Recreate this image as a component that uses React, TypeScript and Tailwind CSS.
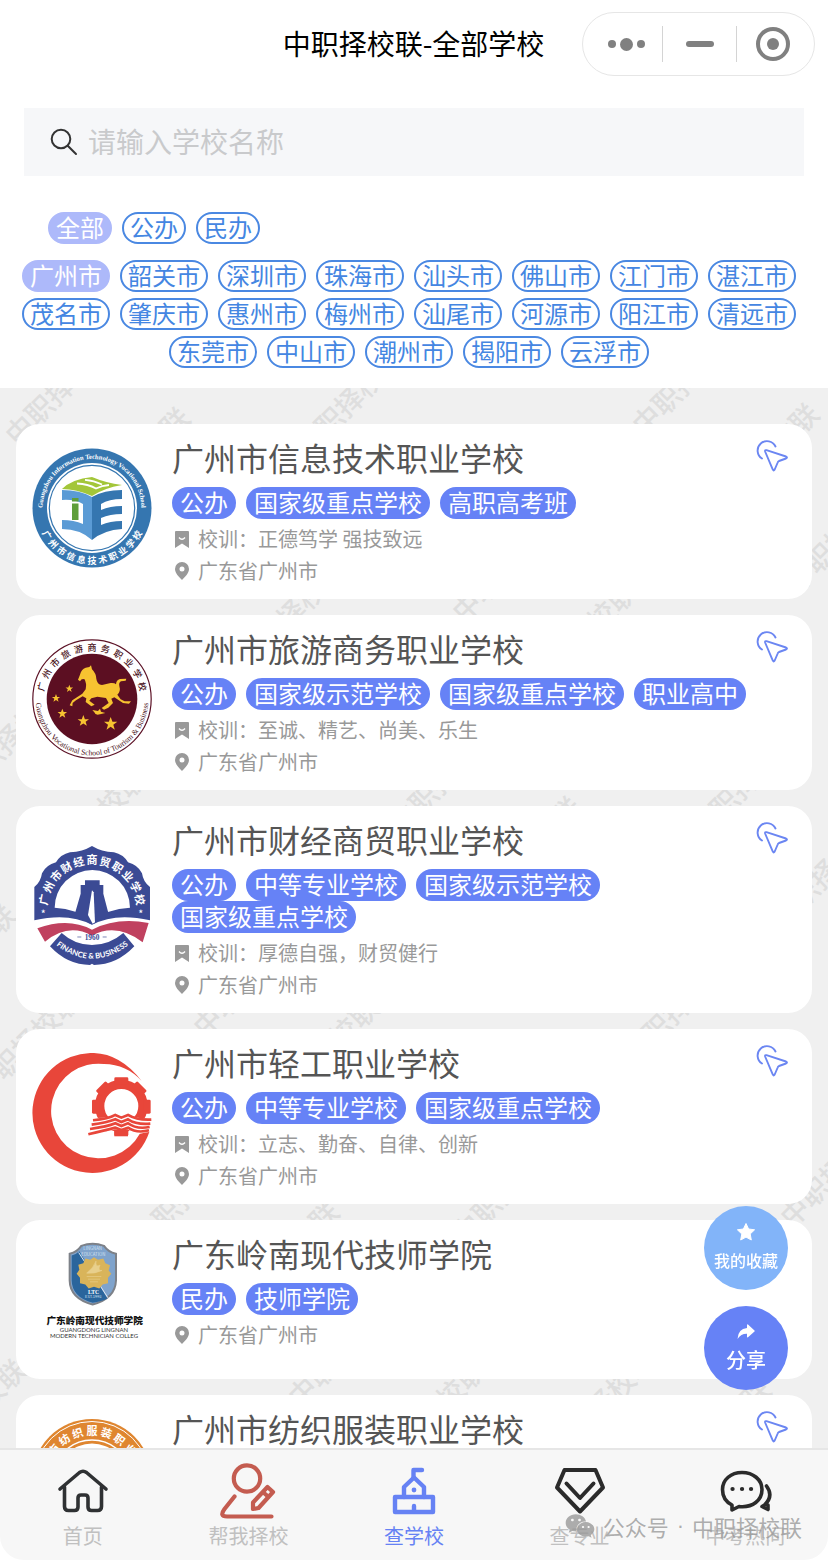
import React, { useState } from "react";
import { FaWeixin } from "react-icons/fa";

interface School {
  name: string;
  tags: string[];
  motto?: string;
  address: string;
  logo: React.FC;
  link: boolean;
}

interface ArcTextProps {
  text: string;
  cx: number;
  cy: number;
  r: number;
  from: number;
  to: number;
  size: number;
  fill: string;
  flip?: boolean;
  className?: string;
}

const KINDS = ["全部", "公办", "民办"];

const CITIES = [
  "广州市", "韶关市", "深圳市", "珠海市", "汕头市", "佛山市", "江门市", "湛江市",
  "茂名市", "肇庆市", "惠州市", "梅州市", "汕尾市", "河源市", "阳江市", "清远市",
  "东莞市", "中山市", "潮州市", "揭阳市", "云浮市",
];

// centre of the first character of every background mark
const MARKS = [
  [20, 42], [96, 114], [310, 54], [647, 32], [725, 110], [800, 190],
  [252, 266], [467, 219], [543, 288], [-30, 391], [53, 474], [404, 431],
  [487, 503], [705, 436], [785, 526], [-78, 611], [-13, 696], [208, 634],
  [285, 704], [637, 661], [147, 846], [467, 841], [245, 908], [795, 824],
  [303, 1004], [392, 1066], [562, 1056], [-68, 1066], [677, 1086],
];

// angles are in degrees, clockwise from the top
const ArcText: React.FC<ArcTextProps> = ({ text, cx, cy, r, from, to, size, fill, flip, className }) => {
  const xs: string[] = [];
  const ys: string[] = [];
  const rotations: string[] = [];
  const chars = text.split("");

  chars.forEach((_, i) => {
    const angle = from + ((to - from) * i) / (chars.length - 1);
    const rad = (angle * Math.PI) / 180;
    const turn = flip ? angle - 180 : angle;
    const turnRad = (turn * Math.PI) / 180;
    xs.push((cx + r * Math.sin(rad) - (Math.cos(turnRad) * size) / 2).toFixed(2));
    ys.push((cy - r * Math.cos(rad) - (Math.sin(turnRad) * size) / 2).toFixed(2));
    rotations.push(turn.toFixed(1));
  });

  return (
    <text x={xs.join(" ")} y={ys.join(" ")} rotate={rotations.join(" ")} fontSize={size} fill={fill} className={className}>
      {text}
    </text>
  );
};

const InfoTechLogo: React.FC = () => (
  <svg viewBox="0 0 120 120" className="size-[120px]">
    <circle cx="60" cy="60" r="59.5" fill="#3576b0" />
    <circle cx="60" cy="60" r="45" fill="#fff" />
    <circle cx="60" cy="60" r="42.7" fill="none" stroke="#3576b0" strokeWidth="1.2" />
    <path d="M30 41Q40 31 60 29Q74 35 90 37Q72 40 60 48Q44 41 30 41Z" fill="#a3c639" />
    <path d="M45 35.5Q56 36 64 40.500Q70 37.500 77 37M53 31.800Q62 32.500 70 36.500" fill="none" stroke="#fff" strokeWidth="1.8" />
    <path d="M30 42Q48 42 60 49V92Q48 81 30 81V72Q42 72 51 76V56Q42 51 30 52Z" fill="#5b9bd5" />
    <path d="M60 49Q72 42 90 42V51Q77 51 69 56V62Q78 58 90 58V66Q78 66 69 70V77Q78 73 90 73V81Q72 82 60 92Z" fill="#3576b0" />
    <path d="M40 50H46.5V53.5H40ZM40 55.5H46.5V72H40Z" fill="#5f9e3a" />
    <path id="infoArc" d="M11.5 69A49.3 49.3 0 1 1 108.5 69" fill="none" />
    <text fontSize="6.6" fill="#fff" textAnchor="middle" className="font-['Liberation_Serif',serif] font-bold">
      <textPath href="#infoArc" startOffset="50%">Guangzhou Information Technology Vocational School</textPath>
    </text>
    <ArcText text="广州市信息技术职业学校" cx={60} cy={60} r={56} from={239} to={121} size={9} fill="#fff" flip className="font-bold" />
  </svg>
);

const TourismLogo: React.FC = () => (
  <svg viewBox="0 0 120 120" className="size-[120px]">
    <circle cx="60" cy="60" r="59.2" fill="#fff" stroke="#5c1226" strokeWidth="1.2" />
    <circle cx="60" cy="60" r="45.3" fill="#5c0f22" />
    <g transform="translate(-12 -9) scale(.3333)" fill="#f7c331">
      <path d="M174 149L180 134Q184 118 197 113L208 111L213 106L216 118Q228 130 229 146Q231 163 246 165L272 159Q284 158 288 163Q289 150 300 147L319 146L317 152L303 154Q296 158 298 168Q303 184 292 194L302 208L314 214L333 214L327 221L309 219L283 202L274 206L279 219L265 233L252 239L245 234L266 219L258 204L232 200L214 205L208 212L224 224L214 229L197 216L199 205L188 199L168 211L158 219L157 229L149 226L157 211L187 191L197 178Q201 160 193 147L185 148L180 154Z" />
      <path d="M217 240L234 243L240 236L243 245L256 249L240 253Q226 257 223 247Z" />
      {[[148, 176, 12], [108, 205, 13], [127, 251, 15], [190, 273, 18], [272, 282, 21]].map(([x, y, s]) => (
        <path
          key={x}
          transform={`translate(${x} ${y}) scale(${s})`}
          d="M0-1L.26-.31L.95-.31L.38.12L.59.81L0 .4L-.59.81L-.38.12L-.95-.31L-.26-.31Z"
        />
      ))}
    </g>
    <ArcText text="广州市旅游商务职业学校" cx={60} cy={60} r={48.5} from={-76} to={76} size={9} fill="#4a1220" className="font-medium" />
    <path id="tourArc" d="M3.6 60A56.4 56.4 0 0 0 116.4 60" fill="none" />
    <text fontSize="7.8" fill="#4a1220" textAnchor="middle" className="font-['Liberation_Serif',serif]">
      <textPath href="#tourArc" startOffset="50%">Guangzhou Vocational School of Tourism &amp; Business</textPath>
    </text>
  </svg>
);

const FinanceLogo: React.FC = () => (
  <svg viewBox="0 0 120 120" className="size-[120px]">
    <g transform="translate(-12 -11) scale(.3333)">
      <path d="M43 256V156Q62 142 66 115Q78 90 108 82Q122 58 150 52Q188 50 216 33Q244 50 282 52Q310 58 324 82Q354 90 366 115Q370 142 390 156V256Q285 232 216 270Q147 232 43 256Z" fill="#3b4a94" />
      <path d="M104 218A113 113 0 0 1 330 218Q262 222 216 257Q170 222 104 218Z" fill="#fff" />
      <path d="M195 136H239V150H250V176L268 245Q238 250 216 268Q194 250 162 245L182 176V150H195Z" fill="#3b4a94" />
      <path d="M216 166L221 172L225 262L218 266L204 240Z" fill="#fff" />
      <path d="M46 258Q145 240 216 270Q287 240 390 258L388 268Q290 248 216 282Q142 250 48 270Z" fill="#fff" />
      <path d="M52 280Q145 246 216 284Q290 246 386 264L368 322Q290 262 216 302Q145 262 75 320Z" fill="#c0415f" />
      <path d="M125 294Q165 330 216 330Q268 330 310 294L343 334Q290 390 222 390L216 386L210 390Q142 390 90 334Z" fill="#3b4a94" />
      <path d="M172 306H184M248 306H260" stroke="#3b4a94" strokeWidth="2" />
      <text x="216" y="314" fontSize="22" fill="#3b4a94" textAnchor="middle" className="font-['Liberation_Serif',serif] font-bold">1960</text>
      <path id="finArc" d="M98 322Q156 371 216 371Q276 371 336 322" fill="none" />
      <text fontSize="23" fill="#fff" textAnchor="middle" className="font-[Lato,sans-serif] font-bold">
        <textPath href="#finArc" startOffset="50%">FINANCE &amp; BUSINESS</textPath>
      </text>
      <ArcText text="广州市财经商贸职业学校" cx={216} cy={222} r={134} from={-79} to={79} size={33} fill="#fff" className="font-bold" />
      <text x="70" y="248" fontSize="32" fill="#fff" textAnchor="middle">*</text>
      <text x="362" y="248" fontSize="32" fill="#fff" textAnchor="middle">*</text>
    </g>
  </svg>
);

const LightIndustryLogo: React.FC = () => (
  <svg viewBox="0 0 120 120" className="size-[120px]">
    <g transform="translate(-12 -12.7) scale(.3333)">
      <path d="M365 122Q300 38 216 38A180 180 0 1 0 388 275L360 280A142 142 0 1 1 252 71Q320 72 365 122Z" fill="#e8463a" />
      <circle cx="304" cy="197" r="65" fill="none" stroke="#e8463a" strokeWidth="28" />
      {[0, 45, 90, 135, 180, 225, 270, 315].map((deg) => (
        <rect key={deg} x="283" y="111" width="42" height="22" rx="4" fill="#e8463a" transform={`rotate(${deg} 304 199)`} />
      ))}
      <path d="M215 232Q260 236 286 220L304 230L324 220Q350 238 396 232L386 272Q350 290 324 268H283Q240 280 200 288Z" fill="#fff" />
      <path d="M283 268H324V288H283Z" fill="#e8463a" />
      <path
        d="M219 240Q265 236 286 224L304 232L324 224Q350 240 394 238M215 253Q262 247 286 237L304 245L324 237Q350 254 391 250M210 266Q262 259 286 249L304 257L324 249Q350 268 389 260M205 282Q255 270 286 262L304 269L324 262Q350 280 387 270"
        fill="none"
        stroke="#e8463a"
        strokeWidth="8"
      />
    </g>
  </svg>
);

const LingnanLogo: React.FC = () => (
  <svg viewBox="0 0 120 120" className="size-[120px]">
    <g transform="translate(-12 -5.5) scale(.3333)">
      <path d="M149 70Q172 64 184 46Q218 34 252 46Q264 64 288 70V150Q286 204 218 222Q150 204 149 150Z" fill="#7fa3cc" stroke="#7d8188" strokeWidth="6" />
      <path d="M155 75Q168 72 178 62L262 204Q245 213 218 217Q156 200 155 150Z" fill="#2a659c" />
      <path d="M176 66L264 202" stroke="#dfe8f2" strokeWidth="3" />
      <path d="M222 80L234 88L250 84L256 98L270 104L266 120L274 130L264 142L264 158L248 162L238 174L222 169L206 174L196 162L180 158L180 142L170 130L178 118L175 103L190 98L196 84L211 88Z" fill="#d9b45a" />
      <path d="M200 128Q222 110 228 92Q226 112 240 104Q232 122 246 120Q226 130 200 128ZM200 138H244M204 146H240M210 154H234" fill="#e8cf8c" stroke="#e8cf8c" strokeWidth="2" />
      <text x="218" y="60" fontSize="13" fill="#d5e2f0" textAnchor="middle">LINGNAN</text>
      <text x="220" y="76" fontSize="13" fill="#d5e2f0" textAnchor="middle">EDUCATION</text>
      <text x="221" y="191" fontSize="17" fill="#fff" textAnchor="middle" className="font-['Liberation_Serif',serif] font-bold">LTC</text>
      <text x="220" y="204" fontSize="12" fill="#d5e2f0" textAnchor="middle">EST.1993</text>
      <text x="224" y="281" fontSize="29" fill="#111" textAnchor="middle" className="font-black">广东岭南现代技师学院</text>
      <text x="222" y="304" fontSize="18" fill="#333" textAnchor="middle" className="font-[Lato,sans-serif]">GUANGDONG LINGNAN</text>
      <text x="222" y="324" fontSize="18" fill="#333" textAnchor="middle" className="font-[Lato,sans-serif]">MODERN TECHNICIAN COLLEG</text>
    </g>
  </svg>
);

const TextileLogo: React.FC = () => (
  <svg viewBox="0 0 120 120" className="size-[120px]">
    <circle cx="60" cy="60" r="60" fill="#df8630" />
    <circle cx="60" cy="60" r="57.5" fill="none" stroke="#fff" strokeWidth="1" />
    <circle cx="60" cy="60" r="39" fill="none" stroke="#fff" strokeWidth="1.5" />
    <circle cx="60" cy="60" r="35.5" fill="#fff" />
    <ArcText text="广州市纺织服装职业学校" cx={60} cy={60} r={44} from={-87} to={87} size={11} fill="#fff" className="font-bold" />
  </svg>
);

const SCHOOLS: School[] = [
  {
    name: "广州市信息技术职业学校",
    tags: ["公办", "国家级重点学校", "高职高考班"],
    motto: "正德笃学 强技致远",
    address: "广东省广州市",
    logo: InfoTechLogo,
    link: true,
  },
  {
    name: "广州市旅游商务职业学校",
    tags: ["公办", "国家级示范学校", "国家级重点学校", "职业高中"],
    motto: "至诚、精艺、尚美、乐生",
    address: "广东省广州市",
    logo: TourismLogo,
    link: true,
  },
  {
    name: "广州市财经商贸职业学校",
    tags: ["公办", "中等专业学校", "国家级示范学校", "国家级重点学校"],
    motto: "厚德自强，财贸健行",
    address: "广东省广州市",
    logo: FinanceLogo,
    link: true,
  },
  {
    name: "广州市轻工职业学校",
    tags: ["公办", "中等专业学校", "国家级重点学校"],
    motto: "立志、勤奋、自律、创新",
    address: "广东省广州市",
    logo: LightIndustryLogo,
    link: true,
  },
  {
    name: "广东岭南现代技师学院",
    tags: ["民办", "技师学院"],
    address: "广东省广州市",
    logo: LingnanLogo,
    link: false,
  },
  {
    name: "广州市纺织服装职业学校",
    tags: ["公办", "国家级重点学校"],
    motto: "厚德强技",
    address: "广东省广州市",
    logo: TextileLogo,
    link: true,
  },
];

const NAV_ITEMS = [
  {
    label: "首页",
    icon: (
      <g stroke="#2f3133" strokeWidth="3.6">
        <path d="M5 27L24.5 10.5Q28 8 31.5 10.5L51 27" />
        <path d="M9.5 25V44.5Q9.5 48.5 13.5 48.5H19.5Q23 48.5 23 45V36Q23 33 26 33H30Q33 33 33 36V45Q33 48.5 36.5 48.5H42.5Q46.5 48.5 46.5 44.5V25" />
      </g>
    ),
  },
  {
    label: "帮我择校",
    icon: (
      <g stroke="#c45c50" strokeWidth="4.2">
        <circle cx="27" cy="16.5" r="13.2" />
        <path d="M14.5 34.5L4.5 47Q-1 54.5 7 54.5H51.5" />
        <path d="M33 47V40.5L47.5 25L53 30L38.5 46Z" />
        <path d="M44 31L48 34.5" />
      </g>
    ),
  },
  {
    label: "查学校",
    icon: (
      <g stroke="#6682f4" strokeWidth="4.4">
        <path d="M9 35H47V50H9Z" />
        <path d="M18 35V25L28 15.5L38 25V35" />
        <path d="M27.5 16V8H36" />
        <path d="M28 49V44" />
        <circle cx="28" cy="28" r="2.4" fill="#6682f4" stroke="none" />
      </g>
    ),
  },
  {
    label: "查专业",
    icon: (
      <g stroke="#2b2b2b" strokeWidth="4">
        <path d="M12.5 8H43.5L51 25.5L28 49.5L5 25.5Z" />
        <path d="M14.5 21.5L28 36L41.5 21.5" />
      </g>
    ),
  },
  {
    label: "中考热问",
    icon: (
      <g stroke="#2b2b2b" strokeWidth="3.6">
        <path d="M15 43V48L22 44.5C36 46 45 38 45 27.5C45 17.500 36 10.500 25 10.500C14 10.500 5.500 17.500 5.500 27.500C5.500 34 9 40 15 43Z" />
        <path d="M49.500 24Q57 34 47.500 43L45 44.500L51 47.500V43" />
        <path d="M15.5 27H15.600M25 27H25.100M34 27H34.100" strokeWidth="4.2" />
      </g>
    ),
  },
];

const SchoolCard: React.FC<{ school: School }> = ({ school }) => {
  const Logo = school.logo;

  return (
    <article className="flex min-h-[159px] rounded-3xl bg-white px-4 py-3">
      <div className="mr-5 flex shrink-0 items-center pb-2">
        <Logo />
      </div>
      <div className="min-w-0 flex-1">
        <h2 className="mb-2 text-[32px] leading-[43px] text-[#555]">{school.name}</h2>
        <ul className="mb-1 flex flex-wrap gap-x-2.5">
          {school.tags.map((tag) => (
            <li key={tag} className="h-8 rounded-full bg-[#6682f6] px-2 text-2xl leading-[30px] text-white">
              {tag}
            </li>
          ))}
        </ul>
        {school.motto && (
          <p className="flex h-8 items-center gap-[9px] pl-[3px] text-xl text-[#999]">
            <svg viewBox="0 0 14 17" className="h-[17px] w-[14px] shrink-0">
              <path d="M1 0H13Q14 0 14 1V17L7 12.5L0 17V1Q0 0 1 0Z" fill="#999" />
              <path d="M4 6.5Q7 10 10 6.5" fill="none" stroke="#fff" strokeWidth="1.4" />
            </svg>
            <span className="pb-px">校训：{school.motto}</span>
          </p>
        )}
        <p className="flex h-8 items-center gap-[9px] pl-[3px] text-xl text-[#999]">
          <svg viewBox="0 0 14 18" className="h-[18px] w-[14px] shrink-0">
            <path d="M7 0A7 7 0 0 1 14 7C14 11 10 15 7 18C4 15 0 11 0 7A7 7 0 0 1 7 0ZM7 4.5A2.5 2.5 0 1 0 7 9.5A2.5 2.5 0 1 0 7 4.5Z" fill="#999" fillRule="evenodd" />
          </svg>
          <span className="pb-px">{school.address}</span>
        </p>
      </div>
      <div className="w-12 shrink-0 pt-1">
        {school.link && (
          <button aria-label="查看学校" className="ml-2 block">
            <svg viewBox="0 0 32 32" className="size-8" fill="none" stroke="#6b86f2" strokeWidth="1.9" strokeLinecap="round" strokeLinejoin="round">
              <path d="M19.500 6.500A9.400 9.400 0 1 0 6 18.500" />
              <path d="M10.500 10.200L30 16.500Q32 17.500 30 18.500L23 21Q22 21.500 21.700 22.500L18.700 29.500Q17.500 31.500 16.700 29.300L9.100 11.500Q8.800 9.700 10.500 10.200Z" />
            </svg>
          </button>
        )}
      </div>
    </article>
  );
};

const App: React.FC = () => {
  const [keyword, setKeyword] = useState("");
  const [kind, setKind] = useState("全部");
  const [city, setCity] = useState("广州市");
  const [activeNav, setActiveNav] = useState("查学校");

  const chipClass = (active: boolean) =>
    active
      ? "h-8 rounded-full border-2 border-[#adb9fa] bg-[#adb9fa] px-1.5 pb-0.5 text-2xl leading-[26px] text-white"
      : "h-8 rounded-full border-2 border-[#4a88e2] px-1.5 pb-0.5 text-2xl leading-[26px] text-[#4486e2]";

  return (
    <div className="flex h-screen flex-col overflow-hidden bg-white font-['Noto_Sans_CJK_SC',sans-serif]">
      <header className="grid grid-cols-[1fr_auto_1fr] items-center py-3 pr-[13px]">
        <h1 className="col-start-2 pb-0.5 pl-3 text-[28px] leading-10 text-black">中职择校联-全部学校</h1>
        <div className="flex h-16 w-[233px] items-center justify-self-end rounded-full border border-[#e6e6e6]">
          <button aria-label="更多" className="flex h-9 flex-1 items-center justify-center gap-1 border-r border-[#d4d4d4] pl-2">
            <span className="size-2 rounded-full bg-[#808080]" />
            <span className="size-[13px] rounded-full bg-[#808080]" />
            <span className="size-2 rounded-full bg-[#808080]" />
          </button>
          <button aria-label="最小化" className="flex h-9 w-[74px] items-center justify-center border-r border-[#d4d4d4]">
            <span className="h-1.5 w-7 rounded-full bg-[#808080]" />
          </button>
          <button aria-label="关闭" className="flex h-9 flex-1 items-center justify-center pr-1.5">
            <span className="flex size-[34px] items-center justify-center rounded-full border-4 border-[#808080]">
              <span className="size-3 rounded-full bg-[#808080]" />
            </span>
          </button>
        </div>
      </header>

      <section className="pt-5">
        <label className="mx-6 flex h-[68px] items-center gap-2.5 bg-[#f6f7f9] pl-[26px]">
          <svg viewBox="0 0 28 28" className="size-7 shrink-0" fill="none" stroke="#333" strokeWidth="2" strokeLinecap="round">
            <circle cx="11" cy="11" r="9.3" />
            <path d="M17.7 17.7L26 26" />
          </svg>
          <input
            type="text"
            aria-label="学校名称"
            value={keyword}
            onChange={(e) => setKeyword(e.target.value)}
            placeholder="请输入学校名称"
            className="min-w-0 flex-1 bg-transparent pb-0.5 text-[28px] outline-none placeholder:text-[#c9cacc]"
          />
        </label>
        <div className="mt-9 flex gap-2.5 pl-12">
          {KINDS.map((item) => (
            <button key={item} onClick={() => setKind(item)} className={chipClass(kind === item)}>
              {item}
            </button>
          ))}
        </div>
        <div className="mt-4 flex flex-wrap justify-center px-3 pb-[14px]">
          {CITIES.map((item) => (
            <div key={item} className="mr-2.5 mb-1.5 flex">
              <button onClick={() => setCity(item)} className={chipClass(city === item)}>
                {item}
              </button>
            </div>
          ))}
        </div>
      </section>

      <main className="relative min-h-0 flex-1 overflow-hidden bg-[#f0f0f0]">
        <svg aria-hidden="true" className="absolute inset-0 size-full font-medium" fill="#dedede" fontSize="28">
          {MARKS.map(([x, y]) => (
            <text key={`${x},${y}`} transform={`translate(${x} ${y}) rotate(-45)`} x="-14" y="10">
              中职择校联
            </text>
          ))}
        </svg>
        <div className="relative flex h-full flex-col gap-4 overflow-y-auto px-4 pt-9 [scrollbar-width:none] *:shrink-0">
          {SCHOOLS.map((school) => (
            <SchoolCard key={school.name} school={school} />
          ))}
        </div>
      </main>

      <div className="fixed right-10 bottom-[170px] flex flex-col gap-4 font-medium text-white">
        <button className="flex size-[84px] flex-col items-center justify-center gap-1 rounded-full bg-[#82b4f9]">
          <svg viewBox="0 0 20 20" className="size-5" fill="#fff" stroke="#fff" strokeWidth="1" strokeLinejoin="round">
            <path d="M10 1.5L12.6 7L18.6 7.8L14.2 12L15.3 18L10 15.1L4.7 18L5.8 12L1.4 7.8L7.4 7Z" />
          </svg>
          <span className="text-base leading-7">我的收藏</span>
        </button>
        <button className="flex size-[84px] flex-col items-center justify-center gap-1 rounded-full bg-[#6682f6]">
          <svg viewBox="0 0 20 20" className="size-5" fill="#fff">
            <path d="M1.5 17Q2 6.8 11 6V2.7Q11.3 2 12 2.5L18.5 8.5Q19 9 18.5 9.5L12 15.3Q11.3 15.8 11 15V11.7Q5 11.5 1.5 17Z" />
          </svg>
          <span className="text-xl leading-7">分享</span>
        </button>
      </div>

      <nav className="relative grid h-28 grid-cols-5 rounded-b-3xl border-t-2 border-[#e6e6e6] bg-[#f7f7f7] pt-3">
        {NAV_ITEMS.map((item) => (
          <a
            key={item.label}
            href={`#${item.label}`}
            onClick={() => setActiveNav(item.label)}
            className="flex flex-col items-center gap-1"
          >
            <svg viewBox="0 0 56 56" className="size-14 overflow-visible" fill="none" strokeLinecap="round" strokeLinejoin="round">
              {item.icon}
            </svg>
            <span className={activeNav === item.label ? "text-xl leading-7 text-[#6682f4]" : "text-xl leading-7 text-[#c0c0c0]"}>
              {item.label}
            </span>
          </a>
        ))}
        <div className="pointer-events-none absolute right-[26px] bottom-[18px] flex items-center gap-2 text-[22px] leading-8 text-[#999]/80">
          <FaWeixin className="size-[30px]" />
          <span>公众号</span>
          <span className="font-['Liberation_Sans',sans-serif]">·</span>
          <span>中职择校联</span>
        </div>
      </nav>
    </div>
  );
};

export default App;
